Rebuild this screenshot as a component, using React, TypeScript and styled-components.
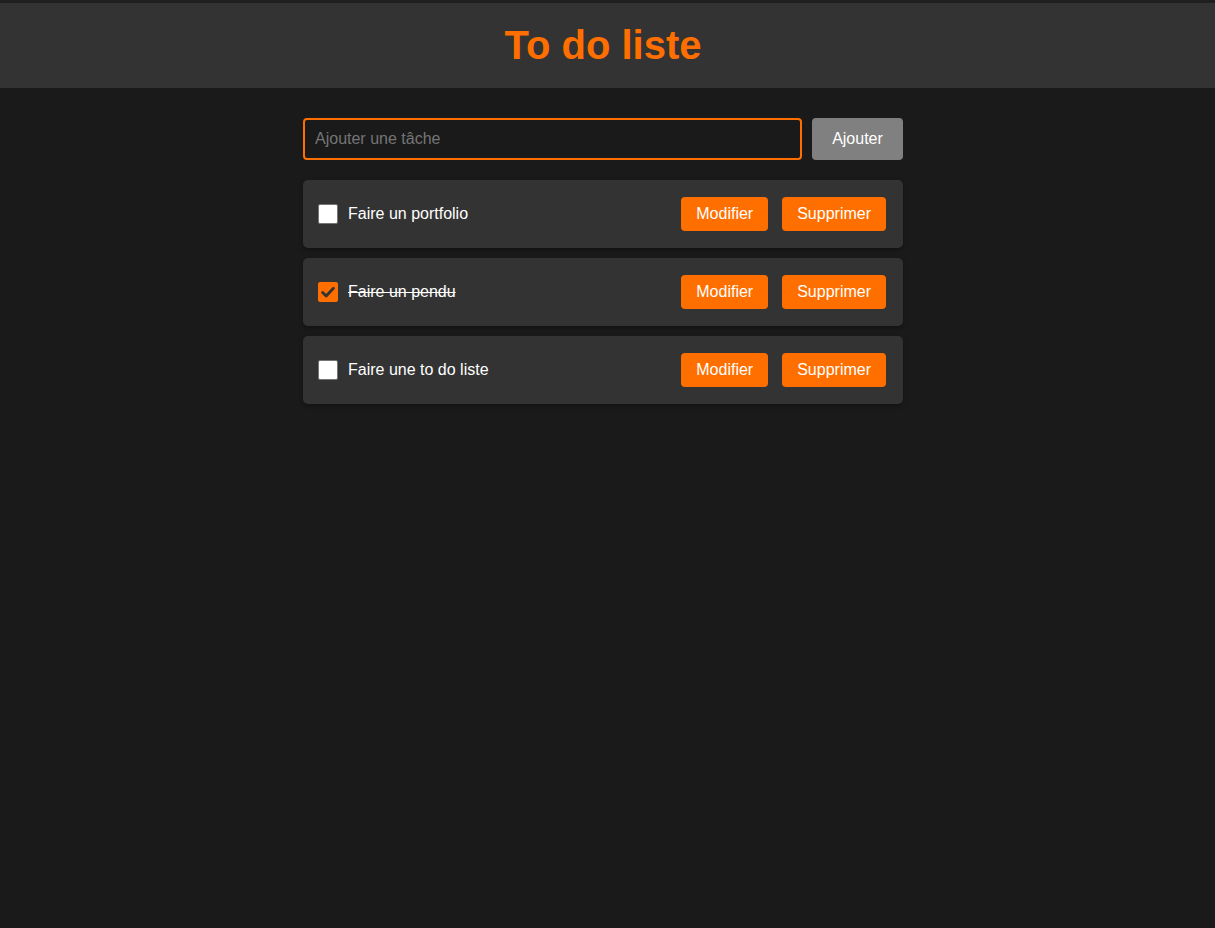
import React, { useState } from 'react';
import styled, { createGlobalStyle } from 'styled-components';

interface Task {
  id: number;
  text: string;
  done: boolean;
}

const GlobalStyle = createGlobalStyle`
  html, body {
    margin: 0;
    padding: 0;
    background: #1a1a1a;
    font-family: "Liberation Sans", Arial, sans-serif;
  }
`;

const initialTasks: Task[] = [
  { id: 1, text: 'Faire un portfolio', done: false },
  { id: 2, text: 'Faire un pendu', done: true },
  { id: 3, text: 'Faire une to do liste', done: false },
];

const App = () => {
  const [tasks, setTasks] = useState<Task[]>(initialTasks);
  const [value, setValue] = useState('');

  const toggle = (id: number) =>
    setTasks(tasks.map((t) => (t.id === id ? { ...t, done: !t.done } : t)));

  const remove = (id: number) => setTasks(tasks.filter((t) => t.id !== id));

  const add = () => {
    if (!value.trim()) return;
    setTasks([...tasks, { id: Date.now(), text: value.trim(), done: false }]);
    setValue('');
  };

  return (
    <Page>
      <GlobalStyle />
      <Header>
        <Title>To do liste</Title>
      </Header>

      <Content>
        <Main>
          <Form
            onSubmit={(e) => {
              e.preventDefault();
              add();
            }}
          >
            <TaskInput
              placeholder="Ajouter une tâche"
              value={value}
              onChange={(e) => setValue(e.target.value)}
            />
            <AddButton type="submit">Ajouter</AddButton>
          </Form>

          <List>
            {tasks.map((task) => (
              <Item key={task.id}>
                <Check $checked={task.done} onClick={() => toggle(task.id)}>
                  {task.done && (
                    <svg width="16" height="16" viewBox="0 0 16 16">
                      <path
                        d="M2.6 8.4 L6.2 12 L13.4 4.2"
                        fill="none"
                        stroke="#333333"
                        strokeWidth="2.8"
                        strokeLinecap="round"
                        strokeLinejoin="round"
                      />
                    </svg>
                  )}
                </Check>
                <Label $done={task.done}>{task.text}</Label>
                <Actions>
                  <ActionButton>Modifier</ActionButton>
                  <ActionButton onClick={() => remove(task.id)}>Supprimer</ActionButton>
                </Actions>
              </Item>
            ))}
          </List>
        </Main>
      </Content>
    </Page>
  );
};

const Page = styled.div`
  min-height: 100vh;
  background: #1a1a1a;
  border-top: 3px solid #1f1f1f;
  box-sizing: border-box;
`;

const Header = styled.header`
  height: 85px;
  background: #333333;
  display: flex;
  align-items: center;
  justify-content: center;
  padding-right: 9px;
`;

const Title = styled.h1`
  margin: 0;
  color: #ff6f00;
  font-size: 40px;
  font-weight: 700;
`;

const Content = styled.div`
  padding: 30px 9px 0 0;
`;

const Main = styled.main`
  width: 600px;
  margin: 0 auto;
`;

const Form = styled.form`
  display: flex;
  gap: 10px;
  margin: 0 0 20px;
`;

const TaskInput = styled.input`
  flex: 1;
  height: 42px;
  box-sizing: border-box;
  background: #1a1a1a;
  border: 2px solid #ff6f00;
  border-radius: 4px;
  padding: 0 10px;
  color: #ffffff;
  font-size: 16px;
  font-family: inherit;
  outline: none;

  &::placeholder {
    color: #757575;
  }
`;

const AddButton = styled.button`
  width: 91px;
  height: 42px;
  background: #808080;
  color: #ffffff;
  border: none;
  border-radius: 4px;
  font-size: 16px;
  font-family: inherit;
  cursor: pointer;
`;

const List = styled.ul`
  list-style: none;
  margin: 0;
  padding: 0;
  display: flex;
  flex-direction: column;
  gap: 10px;
`;

const Item = styled.li`
  height: 68px;
  box-sizing: border-box;
  display: flex;
  align-items: center;
  padding: 0 17px 0 15px;
  background: #333333;
  border-radius: 5px;
  box-shadow: 0 2px 4px rgba(0, 0, 0, 0.3);
`;

const Check = styled.span<{ $checked: boolean }>`
  width: 20px;
  height: 20px;
  box-sizing: border-box;
  display: flex;
  align-items: center;
  justify-content: center;
  border-radius: 2px;
  background: ${({ $checked }) => ($checked ? '#ff6f00' : '#ffffff')};
  border: 1px solid ${({ $checked }) => ($checked ? '#ff6f00' : '#767676')};
  cursor: pointer;
  flex-shrink: 0;
  margin-right: 10px;
`;

const Label = styled.span<{ $done: boolean }>`
  flex: 1;
  color: #ffffff;
  font-size: 16px;
  text-decoration: ${({ $done }) => ($done ? 'line-through' : 'none')};
`;

const Actions = styled.div`
  display: flex;
  gap: 14px;
`;

const ActionButton = styled.button`
  height: 34px;
  padding: 0 15px;
  background: #ff6f00;
  color: #ffffff;
  border: none;
  border-radius: 4px;
  font-size: 16px;
  font-family: inherit;
  cursor: pointer;
`;

export default App;
